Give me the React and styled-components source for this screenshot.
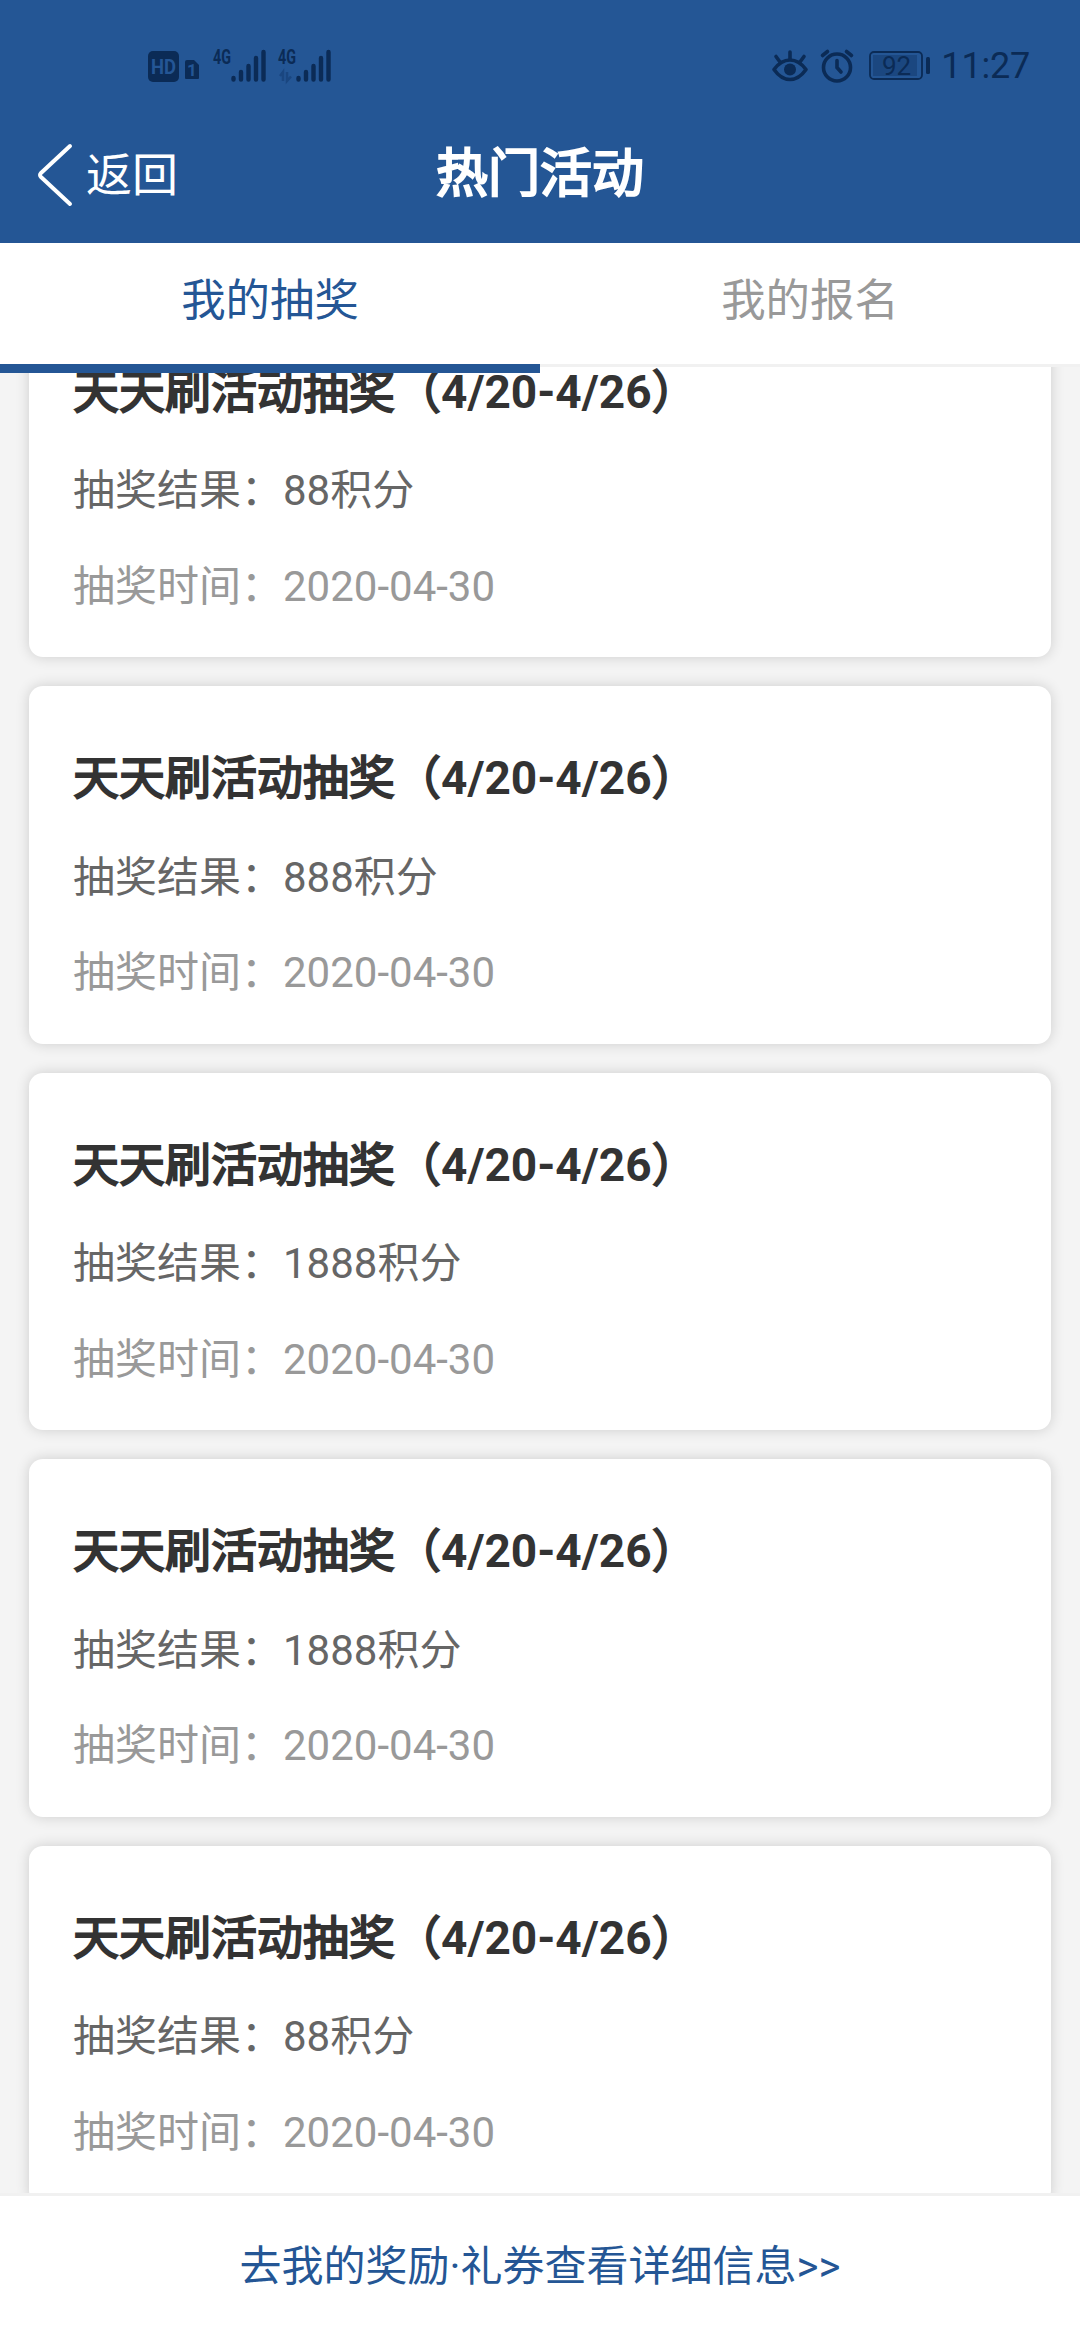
import styled, { createGlobalStyle } from 'styled-components';
import React from 'react';

const GlobalStyle = createGlobalStyle`
	* {
		box-sizing: border-box;
	}
	body {
		margin: 0;
		font-family: Roboto, "Noto Sans CJK SC", sans-serif;
		background-color: #f4f4f4;
	}
`;

const Page = styled.div`
	width: 1080px;
	height: 2340px;
	display: flex;
	flex-direction: column;
	overflow: hidden;
	background-color: #f4f4f4;
`;

const Header = styled.header`
	height: 243px;
	flex-shrink: 0;
	background-color: #245695;
`;

const StatusBar = styled.div`
	height: 108px;
	padding: 24px 50px 0 146px;
	display: flex;
	justify-content: space-between;
	align-items: center;
	color: #0b2b56;

	svg {
		overflow: visible;
	}
`;

const StatusGroup = styled.div`
	display: flex;
	align-items: center;
`;

const Clock = styled.div`
	margin-left: 10px;
	font-size: 36px;
	line-height: 44px;
	letter-spacing: -0.2px;
`;

const NavBar = styled.div`
	height: 135px;
	padding: 0 37px;
	display: grid;
	grid-template-columns: 1fr auto 1fr;
	align-items: center;
	color: #fff;
`;

const BackButton = styled.button`
	display: flex;
	align-items: center;
	gap: 12px;
	padding: 0;
	margin-top: -2px;
	border: none;
	background: none;
	color: inherit;
	font-family: inherit;
	font-size: 46px;
	line-height: 60px;
`;

const PageTitle = styled.h1`
	margin: -2px 0 0;
	font-size: 52px;
	font-weight: 400;
	line-height: 70px;
	-webkit-text-stroke: 2.2px currentColor;
`;

const Tabs = styled.nav`
	height: 124px;
	flex-shrink: 0;
	display: flex;
	position: relative;
	z-index: 1;
	background-color: #fff;
	border-bottom: 3px solid #f1f1f1;
`;

const Tab = styled.div`
	flex: 1;
	position: relative;
	text-align: center;
	font-size: 44.4px;
	line-height: 116px;
	color: ${(props) => (props.$active ? '#245695' : '#999')};

	&::after {
		content: '';
		display: ${(props) => (props.$active ? 'block' : 'none')};
		position: absolute;
		left: 0;
		right: 0;
		top: 121px;
		height: 9px;
		background-color: #245695;
	}
`;

const ListArea = styled.main`
	flex: 1;
	min-height: 0;
	overflow: hidden;
`;

/* the list is scrolled a little way down */
const List = styled.div`
	margin-top: -67.4px;
	padding: 0 29px;
	display: flex;
	flex-direction: column;
	gap: 29px;
`;

const Card = styled.section`
	height: 357.6px;
	flex-shrink: 0;
	padding: 62px 44px 0;
	border-radius: 14px;
	background-color: #fff;
	box-shadow: 0 0 14px rgba(0, 0, 0, 0.16);
`;

const CardTitle = styled.h2`
	margin: 0;
	font-size: 46px;
	font-weight: 400;
	line-height: 60px;
	color: #333;
	-webkit-text-stroke: 1.9px currentColor;
`;

const Digits = styled.span`
	font-weight: 700;
	-webkit-text-stroke: 0;
`;

const CardLine = styled.p`
	margin: ${(props) => (props.$muted ? '39.5px' : '41.5px')} 0 0;
	font-size: 42px;
	line-height: 56px;
	color: ${(props) => (props.$muted ? '#999' : '#666')};
`;

const Footer = styled.footer`
	height: 147px;
	flex-shrink: 0;
	border-top: 3px solid #f1f1f1;
	background-color: #fff;
	text-align: center;
	font-size: 42px;
	line-height: 142px;
	color: #245695;
`;

const records = [
	{ id: 1, result: '88积分', time: '2020-04-30' },
	{ id: 2, result: '888积分', time: '2020-04-30' },
	{ id: 3, result: '1888积分', time: '2020-04-30' },
	{ id: 4, result: '1888积分', time: '2020-04-30' },
	{ id: 5, result: '88积分', time: '2020-04-30' },
];

function SimIcons() {
	return (
		<svg width="54" height="36" viewBox="0 0 54 36">
			<rect x="2" y="3" width="31" height="31" rx="5" fill="currentColor" />
			<text x="17.5" y="26" textAnchor="middle" fontSize="20" fontWeight="700" textLength="25" lengthAdjust="spacingAndGlyphs" fill="#245695">HD</text>
			<path d="M41 12H48L53 17V30Q53 31 52 31H40Q39 31 39 30V14Q39 12 41 12Z" fill="currentColor" />
			<text x="46" y="28" textAnchor="middle" fontSize="17" fontWeight="700" fill="#245695">1</text>
		</svg>
	);
}

function Signal({ data }) {
	return (
		<svg width="65" height="36" viewBox="0 0 65 36">
			<text x="10" y="16" fontSize="21" fontWeight="700" textLength="18" lengthAdjust="spacingAndGlyphs" fill="currentColor">4G</text>
			<g stroke="currentColor" strokeWidth="4.4" strokeLinecap="round">
				<path d="M30.5 30V31.5M38 24V31.5M45.5 18V31.5M53 10V31.5M60.5 4V31.5" />
			</g>
			{data && (
				<path d="M12 28L15 24V33M19 24V33L23 28.5" fill="none" stroke="#1a4680" strokeWidth="2.5" />
			)}
		</svg>
	);
}

function Eye() {
	return (
		<svg width="36" height="32" viewBox="0 0 36 32" fill="none" stroke="currentColor" strokeWidth="3.6" strokeLinecap="round">
			<path d="M2 19.5Q9 10 18 10T34 19.5Q27 29.5 18 29.5T2 19.5Z" strokeLinejoin="round" />
			<path d="M18 9V2M8 12L4 6.5M28 12L32 6.5" />
			<circle cx="18" cy="19.5" r="6" fill="currentColor" stroke="none" />
		</svg>
	);
}

function Alarm() {
	return (
		<svg width="34" height="34" viewBox="0 0 34 34" fill="none" stroke="currentColor" strokeWidth="3.6" strokeLinecap="round">
			<circle cx="17" cy="18.5" r="13.5" />
			<path d="M2.5 6.5L7.5 2.5M31.5 6.5L26.5 2.5M17 11.5V18.5L21 23" />
		</svg>
	);
}

function Battery() {
	return (
		<svg width="62" height="30" viewBox="0 0 62 30">
			<rect x="1" y="1" width="52" height="27" rx="4" fill="none" stroke="currentColor" strokeWidth="1.8" />
			<rect x="4" y="4" width="44" height="21" fill="#1b4780" />
			<rect x="57" y="6" width="4" height="17" rx="1.5" fill="currentColor" />
			<text x="27.5" y="23.5" textAnchor="middle" fontSize="26" fill="currentColor">92</text>
		</svg>
	);
}

const IconGap = styled.span`
	display: flex;
	margin-left: ${(props) => props.$size}px;
`;

function App() {
	return (
		<Page lang="zh-CN">
			<GlobalStyle />
			<Header>
				<StatusBar>
					<StatusGroup>
						<SimIcons />
						<IconGap $size={3}><Signal /></IconGap>
						<IconGap $size={0}><Signal data /></IconGap>
					</StatusGroup>
					<StatusGroup>
						<Eye />
						<IconGap $size={12}><Alarm /></IconGap>
						<IconGap $size={15}><Battery /></IconGap>
						<Clock>11:27</Clock>
					</StatusGroup>
				</StatusBar>
				<NavBar>
					<BackButton>
						<svg width="37" height="64" viewBox="0 0 37 64" fill="none" stroke="currentColor" strokeWidth="4" strokeLinecap="round" strokeLinejoin="round">
							<path d="M33 3L4 30Q2 32 4 34L33 61" />
						</svg>
						返回
					</BackButton>
					<PageTitle>热门活动</PageTitle>
				</NavBar>
			</Header>
			<Tabs>
				<Tab $active>我的抽奖</Tab>
				<Tab>我的报名</Tab>
			</Tabs>
			<ListArea>
				<List>
					{records.map((item) => (
						<Card key={item.id}>
							<CardTitle>天天刷活动抽奖（<Digits>4/20-4/26</Digits>）</CardTitle>
							<CardLine>抽奖结果：{item.result}</CardLine>
							<CardLine $muted>抽奖时间：{item.time}</CardLine>
						</Card>
					))}
				</List>
			</ListArea>
			<Footer>去我的奖励·礼券查看详细信息&gt;&gt;</Footer>
		</Page>
	);
}

export default App;
